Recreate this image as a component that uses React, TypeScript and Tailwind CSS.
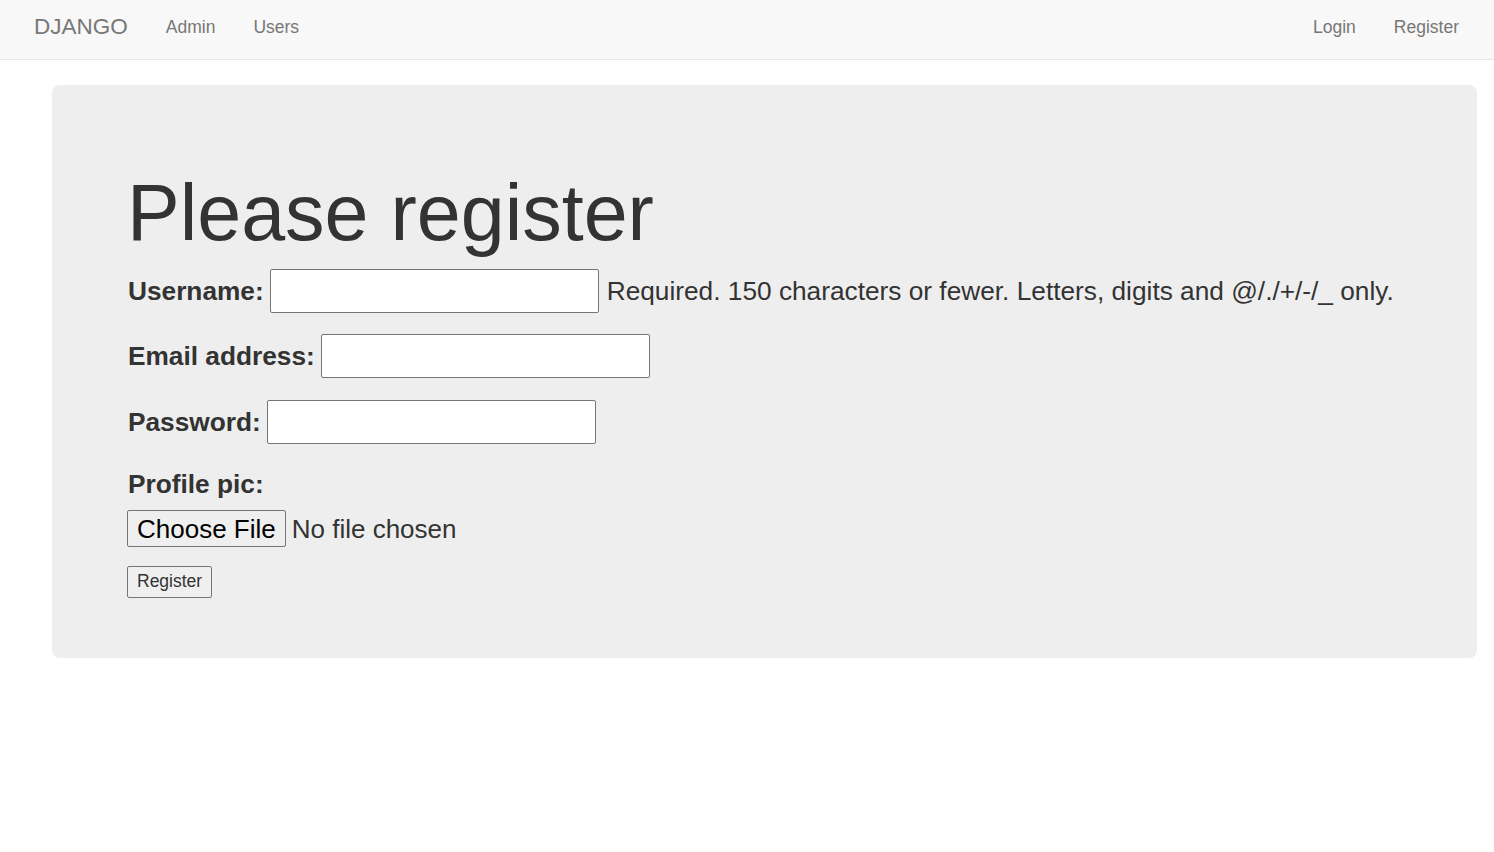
import React from 'react';

const font = { fontFamily: '"Liberation Sans", Arial, Helvetica, sans-serif' };

const Field: React.FC<{ label: string; help?: string; className?: string }> = ({ label, help, className }) => (
  <div className={`flex items-center h-[44px] ${className ?? ''}`}>
    <label className="font-bold text-[26.25px] text-[#333] ml-px mr-[6px] leading-none">{label}</label>
    <input
      type="text"
      className="w-[329px] h-[44px] bg-white border border-[#767676] rounded-[2px] outline-none"
    />
    {help && <span className="ml-[8px] text-[26.25px] text-[#333] leading-none">{help}</span>}
  </div>
);

const App: React.FC = () => {
  return (
    <div className="min-h-[852px] bg-white" style={font}>
      {/* Navbar */}
      <nav className="h-[60px] pb-[4px] bg-[#f8f8f8] border-b border-[#e7e7e7] flex items-center justify-between">
        <div className="flex items-center">
          <a className="ml-[34px] text-[22.5px] text-[#777] leading-none">DJANGO</a>
          <a className="ml-[38px] text-[17.5px] text-[#777] leading-none">Admin</a>
          <a className="ml-[38px] text-[17.5px] text-[#777] leading-none">Users</a>
        </div>
        <div className="flex items-center mr-[35px]">
          <a className="text-[17.5px] text-[#777] leading-none">Login</a>
          <a className="ml-[38px] text-[17.5px] text-[#777] leading-none">Register</a>
        </div>
      </nav>

      {/* Jumbotron */}
      <div className="mt-[25px] ml-[52px] mr-[17px] bg-[#eee] rounded-[8px] pl-[75px] pt-[85px] pb-[60px]">
        <h1 className="text-[79px] leading-[1.1] text-[#333] font-normal">Please register</h1>
        <form className="mt-[12px]" onSubmit={e => e.preventDefault()}>
          <Field label="Username:" help="Required. 150 characters or fewer. Letters, digits and @/./+/-/_ only." />
          <Field label="Email address:" className="mt-[21px]" />
          <Field label="Password:" className="mt-[22px]" />
          <div className="mt-[27px] ml-px font-bold text-[26.25px] text-[#333] leading-none">Profile pic:</div>
          <div className="mt-[13px] flex items-center">
            <button
              type="button"
              className="h-[37px] px-[9px] bg-[#efefef] border border-[#767676] rounded-[2px] text-[26px] text-black leading-none"
            >
              Choose File
            </button>
            <span className="ml-[6px] text-[26px] text-[#333] leading-none">No file chosen</span>
          </div>
          <button
            type="submit"
            className="mt-[19px] h-[32px] px-[9px] bg-[#efefef] border border-[#767676] rounded-[2px] text-[17.5px] text-[#333] leading-none"
          >
            Register
          </button>
        </form>
      </div>
    </div>
  );
};

export default App;
